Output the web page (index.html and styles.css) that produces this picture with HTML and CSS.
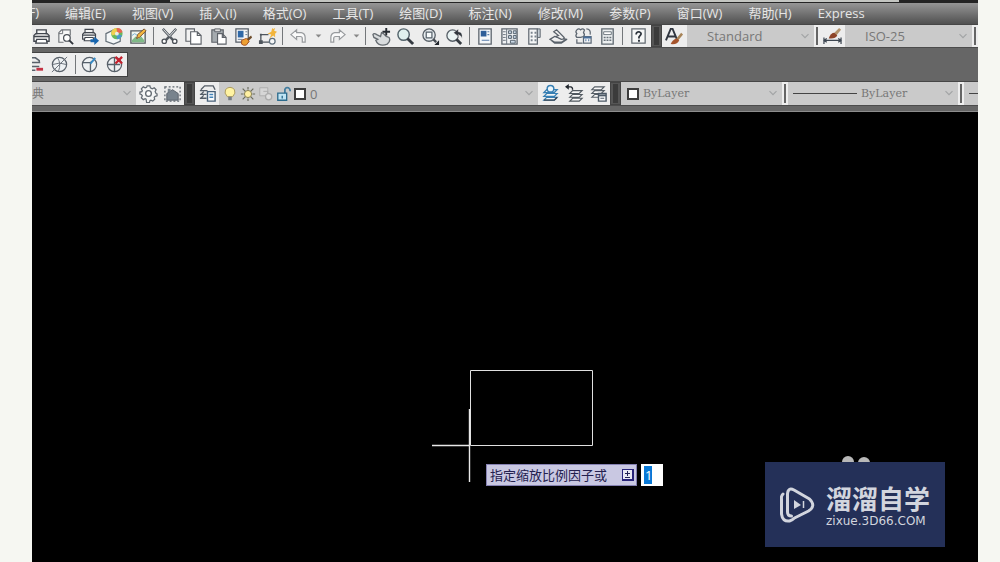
FILE: index.html
```html
<!DOCTYPE html>
<html lang="zh-CN">
<head>
<meta charset="utf-8">
<title>CAD</title>
<link rel="stylesheet" href="styles.css">
</head>
<body>
<svg class="defs" aria-hidden="true">
  <symbol id="chev" viewBox="0 0 8 6"><path d="M1 1l3 3 3-3" fill="none" stroke="#a2a4a5"/></symbol>
  <symbol id="printer" viewBox="0 0 20 20"><path d="M5 8V3h10v5M5 15H2V9l2-2h12l2 2v6h-3" fill="#f4f4f4" stroke="#41464e" stroke-width="1.4"/><path d="M2 10h16" stroke="#41464e" stroke-width="1.6"/><path d="M5 13h10l1 4H4z" fill="#fff" stroke="#41464e" stroke-width="1.4"/></symbol>
  <symbol id="layers" viewBox="0 0 20 20"><path d="M6 6h11l-3 3H3zM6 10h11l-3 3H3zM6 14h11l-3 3H3z" fill="#f2f4f5" stroke="currentColor" stroke-width="1.3"/></symbol>
  <symbol id="sphere" viewBox="0 0 20 20"><circle cx="10" cy="10" r="7.5" fill="#eef1f3" stroke="#59616a" stroke-width="1.3"/></symbol>
</svg>
<main class="app">
  <div class="titlestrip"><span class="tabstrip"></span></div>
  <nav class="menubar">
    <button class="menu menu-cut">(F)</button>
    <button class="menu">编辑(E)</button>
    <button class="menu">视图(V)</button>
    <button class="menu">插入(I)</button>
    <button class="menu">格式(O)</button>
    <button class="menu">工具(T)</button>
    <button class="menu">绘图(D)</button>
    <button class="menu">标注(N)</button>
    <button class="menu">修改(M)</button>
    <button class="menu">参数(P)</button>
    <button class="menu">窗口(W)</button>
    <button class="menu">帮助(H)</button>
    <button class="menu">Express</button>
  </nav>

  <div class="bar">
    <div class="group group-first">
      <button class="tool" aria-label="打印"><svg viewBox="0 0 20 20"><use href="#printer"/></svg></button>
      <button class="tool" aria-label="打印预览"><svg viewBox="0 0 20 20"><path d="M8 16H3V6l3-3h9v6" fill="#f8f8f8" stroke="#6d7176" stroke-width="1.2"/><path d="M3 7h4V3" fill="none" stroke="#6d7176"/><circle cx="11.500" cy="11.500" r="3.500" fill="#fff" stroke="#4b5057" stroke-width="1.3"/><path d="M14 14l4 4" stroke="#30353c" stroke-width="2"/></svg></button>
      <button class="tool" aria-label="发布"><svg viewBox="0 0 20 20"><use href="#printer" width="17" height="17"/><path d="M10 13h4v-3l5 4.500-5 4.500v-3h-4z" fill="#1765ae"/></svg></button>
      <button class="tool" aria-label="三维打印"><svg viewBox="0 0 20 20"><path d="M1 7l8-4 7 4v8l-7 3-8-3z" fill="#f4f7f8" stroke="#657079" stroke-width="1.3"/><circle cx="12.500" cy="7" r="6" fill="#68b95c"/><path d="M12 1a6 6 0 0 1 6.500 4.500L13 7z" fill="#e96652"/><path d="M6.500 7a6 6 0 0 1 5.500-6l1 6-5 2z" fill="#f0cf50"/><path d="M12 7l6 2a6 6 0 0 1-5.500 4z" fill="#4798cd"/><circle cx="12.500" cy="7" r="2" fill="#e8ede9"/></svg></button>
      <button class="tool" aria-label="标记"><svg viewBox="0 0 20 20"><path d="M2 4h15v13H2z" fill="#f0f5ee" stroke="#565c60" stroke-width="1.4"/><path d="M3 14l4-4 3 2 3-2 3 4v2H3z" fill="#7fb987"/><path d="M3 9l3-2 3 2 3-3" stroke="#75afd2" fill="none"/><path d="M8 12l1-4 7-6 2 2-7 7z" fill="#f4b63d" stroke="#76512e"/></svg></button>
    </div>
    <span class="sep"></span>
    <div class="group group-five">
      <button class="tool" aria-label="剪切"><svg viewBox="0 0 20 20"><path d="M3 2l11 12M17 2L6 14" stroke="#555b62" stroke-width="2.600"/><path d="M3.500 2.500l7 7.500M16.500 2.500L10 9.500" stroke="#eef0f1" stroke-width="1"/><circle cx="4.500" cy="15" r="2.300" fill="#fff" stroke="#4c5158" stroke-width="1.4"/><circle cx="15.500" cy="15" r="2.300" fill="#fff" stroke="#4c5158" stroke-width="1.4"/></svg></button>
      <button class="tool" aria-label="复制"><svg viewBox="0 0 20 20"><path d="M2 2h9v13H2z" fill="#f2f2f2" stroke="#5d6268" stroke-width="1.2"/><path d="M7 5h7l4 4v9H7zM14 5v4h4" fill="#fff" stroke="#5d6268" stroke-width="1.2"/></svg></button>
      <button class="tool" aria-label="粘贴"><svg viewBox="0 0 20 20"><path d="M3 3h12v13H3z" fill="#a5abaf" stroke="#5d6268" stroke-width="1.2"/><path d="M6 2h6v3H6z" fill="#ddd" stroke="#5d6268"/><path d="M9 7h5l4 4v7H9zM14 7v4h4" fill="#fff" stroke="#5d6268" stroke-width="1.2"/></svg></button>
      <button class="tool" aria-label="特性匹配"><svg viewBox="0 0 20 20"><path d="M2 2h13v14H2z" fill="#f4f5f6" stroke="#555d67" stroke-width="1.3"/><path d="M4 4h6v7H4z" fill="#2f68a7"/><path d="M12 5h2M12 8h2M4 13h5" stroke="#657c94"/><path d="M13 13l5-4 1 2-4 4z" fill="#6d4b29"/><path d="M8 14l5-2 3 3-3 4q-3 1-5-1z" fill="#eda032" stroke="#a45021"/></svg></button>
      <button class="tool" aria-label="块编辑器"><svg viewBox="0 0 20 20"><path d="M3 16V8h8m-8 8h10" fill="none" stroke="#4e555d" stroke-width="1.4"/><path d="M1 14h4v4H1zM2 7h2v2H2z" fill="#4e555d"/><circle cx="15" cy="15" r="3" fill="#f6f7f8" stroke="#5e6e7c" stroke-width="1.3"/><path d="M15 1l-1 4-4 2 4 1-2 4 4-3 2 2v-4l2-2-3-1 1-3-2 1z" fill="#f2b53d"/></svg></button>
    </div>
    <span class="sep"></span>
    <div class="group group-undo">
      <button class="tool" aria-label="放弃"><svg viewBox="0 0 20 20"><path d="M2 8l6-5v3h5q4 1 4 5v5h-3v-4q0-2-2-2H8v3z" fill="#fafafa" stroke="#989b9e" stroke-width="1.3"/></svg></button>
      <button class="tool drop" aria-label="放弃列表"><svg viewBox="0 0 20 20"><path d="M7 8h6l-3 3z" fill="#888"/></svg></button>
      <button class="tool" aria-label="重做"><svg viewBox="0 0 20 20"><path d="M18 8l-6-5v3H7q-4 1-4 5v5h3v-4q0-2 2-2h4v3z" fill="#fafafa" stroke="#989b9e" stroke-width="1.3"/></svg></button>
      <button class="tool drop" aria-label="重做列表"><svg viewBox="0 0 20 20"><path d="M7 8h6l-3 3z" fill="#888"/></svg></button>
    </div>
    <span class="sep"></span>
    <div class="group group-four">
      <button class="tool" aria-label="平移"><svg viewBox="0 0 20 20"><path d="M1 8q1-2 4 0l4 2 1-4 2 1 3 3 3 1q2 4-2 7-5 2-9 0-2-1-3-4l2-1-4-2z" fill="#d9dcde" stroke="#666c72" stroke-width="1.4"/><path d="M15 1v8M11 5h8" stroke="#252a31" stroke-width="2"/></svg></button>
      <button class="tool" aria-label="实时缩放"><svg viewBox="0 0 20 20"><circle cx="8" cy="8" r="6" fill="#e0f0ee" stroke="#53636b" stroke-width="1.5"/><path d="M12 12l6 6" stroke="#353b42" stroke-width="3"/></svg></button>
      <button class="tool" aria-label="窗口缩放"><svg viewBox="0 0 20 20"><circle cx="8.500" cy="8.500" r="6.500" fill="#e8edf0" stroke="#596169" stroke-width="1.4"/><path d="M5.500 5.500h6v6h-6z" fill="#f8fbfc" stroke="#56616b" stroke-width="1.3"/><path d="M13 13l3 3" stroke="#454b52" stroke-width="2.500"/><path d="M19 14v5h-5z" fill="#20252c"/></svg></button>
      <button class="tool" aria-label="上一个缩放"><svg viewBox="0 0 20 20"><circle cx="8" cy="9" r="6" fill="#eaf4f4" stroke="#596169" stroke-width="1.4"/><path d="M12 13l5 5" stroke="#353b42" stroke-width="3"/><path d="M9 6l5-4v3q5 0 4 7-1-3-4-4v2z" fill="#30363e" stroke="#f0f0f0" stroke-width=".5"/></svg></button>
    </div>
    <span class="sep"></span>
    <div class="group group-six">
      <button class="tool" aria-label="特性"><svg viewBox="0 0 20 20"><path d="M3 2h13v16H3z" fill="#f5f7f9" stroke="#606871" stroke-width="1.4"/><path d="M5 4h6v6H5z" fill="#2e5e99"/><path d="M12 5h2M12 8h2M6 14h8" stroke="#597eab" stroke-width="1.2"/></svg></button>
      <button class="tool" aria-label="设计中心"><svg viewBox="0 0 20 20"><path d="M2 2h16v16H2z" fill="#f0f2f4" stroke="#606871" stroke-width="1.4"/><path d="M7 2v16M3 5h3M3 8h3M3 11h3M3 14h3" stroke="#69737d"/><path d="M9 4h3v3H9zM14 4h3v3h-3zM9 9h3v3H9zM14 9h3v3h-3zM11 14h5v3h-5z" fill="#cbd9e6" stroke="#53606b"/></svg></button>
      <button class="tool" aria-label="工具选项板"><svg viewBox="0 0 20 20"><path d="M4 2h9v16H4z" fill="#f5f6f7" stroke="#606871" stroke-width="1.3"/><path d="M13 2h3v9h-3z" fill="#c4cdd4" stroke="#606871"/><path d="M6 5h2v2H6zM10 5h2v2h-2zM6 9h2v2H6zM10 9h2v2h-2zM6 13h2v2H6zM10 13h2v2h-2z" fill="#7a848e"/></svg></button>
      <button class="tool" aria-label="图纸集"><svg viewBox="0 0 20 20"><path d="M1 13l5-3 12 3-5 3H6zM1 13l5 4h7l6-4" fill="#f3f4f5" stroke="#59616a" stroke-width="1.3"/><path d="M5 5l3-2 8 8q0 2-3 2l-6-3 3-1z" fill="#eee" stroke="#59616a" stroke-width="1.3"/></svg></button>
      <button class="tool" aria-label="标记集"><svg viewBox="0 0 20 20"><path d="M3 3q2-2 4 0 2-2 4 0l-1 3q2 2 0 4l-3 1-4 0q-2-2 0-4-2-2 0-4zM3 13v4h6M13 2q5 0 4 6" fill="none" stroke="#5d6670" stroke-width="1.3"/><path d="M10 10h8v7h-8z" fill="#f4f5f6" stroke="#5b6876" stroke-width="1.3"/><path d="M10 11h8M12 14h1M15 14h1" stroke="#496f9b" stroke-width="2"/></svg></button>
      <button class="tool" aria-label="计算器"><svg viewBox="0 0 20 20"><path d="M4 2h12v16H4z" fill="#edf0f1" stroke="#626b73" stroke-width="1.4"/><path d="M6 5h8v3H6z" fill="#fff" stroke="#6a747c"/><path d="M6 11h2M9 11h2M12 11h2M6 14h2M9 14h2M12 14h2" stroke="#68717a" stroke-width="1.5"/></svg></button>
    </div>
    <span class="sep"></span>
    <div class="group"><button class="tool" aria-label="帮助"><svg viewBox="0 0 20 20"><path d="M3 2h14v15H3z" fill="#f6f7f7" stroke="#616970" stroke-width="1.3"/><path d="M7.500 8q0-3 3-3 3 1 2 3l-2 2.500V12" fill="none" stroke="#293039" stroke-width="1.8"/><path d="M9.500 13.500h2v2h-2z" fill="#293039"/></svg></button></div>
    <span class="grip"></span>
    <div class="group"><button class="tool" aria-label="文字样式"><svg viewBox="0 0 20 20"><path d="M1 14L6 2h2l5 12M3 10h8" fill="none" stroke="#303640" stroke-width="2"/><path d="M12 12l5-6 2 2-5 6z" fill="#a78458"/><path d="M6 18q2-5 6-6l3 2q-2 5-9 4z" fill="#a6542c"/></svg></button></div>
    <label class="combo combo-style"><select aria-label="文字样式名"><option>Standard</option></select><svg class="chev"><use href="#chev"/></svg></label>
    <span class="divider"></span>
    <div class="group"><button class="tool" aria-label="标注样式"><svg viewBox="0 0 20 20"><path d="M1 11v7M19 11v7M1 14h18M4 12l-3 2 3 2M16 12l3 2-3 2" fill="none" stroke="#3e4752" stroke-width="1.3"/><path d="M12 6l5-5 2 2-5 6z" fill="#b3946c"/><path d="M6 12q2-6 6-6l3 3q-2 4-9 3z" fill="#8e4529"/></svg></button></div>
    <label class="combo combo-style"><select aria-label="标注样式名"><option>ISO-25</option></select><svg class="chev"><use href="#chev"/></svg></label>
    <span class="divider"></span>
  </div>

  <div class="bar-float">
    <button class="tool tool-half" aria-label="线框"><svg viewBox="0 0 20 20"><path d="M3 8V3h8l4 3v2M2 8h14M3 12h12M3 16h8" fill="none" stroke="#59616a" stroke-width="1.6"/><path d="M12 15h7" stroke="#c43244" stroke-width="3"/></svg></button>
    <button class="tool tool-small" aria-label="隐藏"><svg viewBox="0 0 20 20"><use href="#sphere"/><path d="M8 3q4 6 1 14M3 10q7-3 14 0M2 18L18 2" fill="none" stroke="#69717a"/></svg></button>
    <span class="sep sep-float"></span>
    <button class="tool" aria-label="着色"><svg viewBox="0 0 20 20"><use href="#sphere"/><path d="M3 8h8v9M11 8l4-3" fill="none" stroke="#56616b" stroke-width="1.4"/><path d="M11 9l5-6" stroke="#398cc7" stroke-width="2"/></svg></button>
    <button class="tool" aria-label="删除"><svg viewBox="0 0 20 20"><use href="#sphere"/><path d="M3 10h13M10 3v14" fill="none" stroke="#56616b" stroke-width="1.4"/><path d="M11 2l7 7M18 2l-7 7" stroke="#c5222f" stroke-width="2.400"/></svg></button>
  </div>

  <div class="bar bar-layers">
    <label class="combo combo-space"><select aria-label="工作空间"><option>典</option></select><svg class="chev"><use href="#chev"/></svg></label>
    <div class="group">
      <button class="tool" aria-label="工作空间设置"><svg viewBox="0 0 20 20"><path d="M8.500 2h3l.5 2 2 1 2-1 2 2-1 2 1 2 1 .5v2l-2 .5-1 1 .5 2-2 2-2-1-1 .5-.5 2h-3L7.500 16l-1-.5-2 1-2-2 1-2-1-1.500-1.500-.5v-2L3 8l.5-1L2.500 5l2-2 2 1L8 3.500z" fill="#f4f5f5" stroke="#626a72" stroke-width="1.3"/><circle cx="10" cy="10" r="3" fill="#fff" stroke="#626a72" stroke-width="1.4"/></svg></button>
      <button class="tool" aria-label="我的工作空间"><svg viewBox="0 0 20 20"><path d="M2 3h16v15H2z" fill="none" stroke="#5c646c" stroke-width="1.3" stroke-dasharray="2 2"/><path d="M4 10l6-4 6 4v7H4z" fill="#78838d" stroke="#59616a"/><path d="M5 9V5h3v3" fill="#78838d"/></svg></button>
    </div>
    <span class="grip"></span>
    <div class="group"><button class="tool" aria-label="图层特性"><svg viewBox="0 0 20 20"><path d="M3 6l4-4h9l2 4M2 7h8M2 11h7M2 15h7M3 11l3-3M3 15l3-3" fill="none" stroke="#565e67" stroke-width="1.4"/><path d="M10 8h8v10h-8z" fill="#fafcfe" stroke="#486179" stroke-width="1.5"/><path d="M12 11h4M12 14h4" stroke="#4383b8" stroke-width="1.5"/></svg></button></div>
    <label class="combo combo-layer">
      <svg class="mini" viewBox="0 0 16 18"><path d="M5 12Q1 8 3 4q5-5 10 0 2 4-2 8z" fill="#fff3a2" stroke="#a29257"/><path d="M6 12h4v4H6z" fill="#777e86"/></svg>
      <svg class="mini" viewBox="0 0 16 18"><path d="M8 1v3M8 14v3M0 9h3M13 9h3M2 3l3 3M11 12l3 3M14 3l-3 3M2 15l3-3" stroke="#696b5d" stroke-width="1.3"/><circle cx="8" cy="9" r="4" fill="#fff0a2" stroke="#7d7548"/></svg>
      <svg class="mini" viewBox="0 0 16 18"><path d="M1 2h9v9H1zM5 6h5v7" fill="#d6d6d6" stroke="#aaa"/><circle cx="11" cy="12" r="3.500" fill="#ddd" stroke="#aaa" stroke-width="1.4"/></svg>
      <svg class="mini" viewBox="0 0 16 18"><path d="M9 9V4q1-3 4-2 2 1 2 4" fill="none" stroke="#427d9f" stroke-width="2"/><path d="M1 8h10v8H1z" fill="#bfe4f4" stroke="#2c6b8c" stroke-width="1.5"/><path d="M6 11v3" stroke="#2c6b8c" stroke-width="1.5"/></svg>
      <span class="swatch"></span>
      <select aria-label="图层"><option>0</option></select><svg class="chev"><use href="#chev"/></svg>
    </label>
    <div class="group">
      <button class="tool" aria-label="置为当前"><svg class="blue" viewBox="0 0 20 20"><use href="#layers"/><circle cx="10" cy="5" r="3.500" fill="#e9f4fa" stroke="#357eb3" stroke-width="1.5"/><path d="M3 17h11l3-3" fill="none" stroke="#3d4650" stroke-width="1.5"/></svg></button>
      <button class="tool" aria-label="上一个图层"><svg viewBox="0 0 20 20"><path d="M8 7h10l-3 3H5zM8 11h10l-3 3H5zM8 15h10l-3 3H5z" fill="#f8f8f8" stroke="#50585f" stroke-width="1.2"/><path d="M3 3h3q2 0 2 3" fill="none" stroke="#20262d" stroke-width="1.4"/><path d="M4 0v6L0 3z" fill="#20262d"/></svg></button>
      <button class="tool" aria-label="图层状态"><svg viewBox="0 0 20 20"><path d="M6 3h10l-3 3H3zM6 7h10l-3 3H3zM6 11h10l-3 3H3z" fill="#f8f8f8" stroke="#565e66" stroke-width="1.2"/><path d="M10 10h8v8h-8z" fill="#f8f9fa" stroke="#4c5966" stroke-width="1.5"/><path d="M10 12h8" stroke="#4c5966" stroke-width="2"/><path d="M12 15h4" stroke="#4c5966"/></svg></button>
    </div>
    <span class="grip"></span>
    <label class="combo combo-color"><span class="swatch"></span><select class="serif" aria-label="颜色"><option>ByLayer</option></select><svg class="chev"><use href="#chev"/></svg></label>
    <span class="divider"></span>
    <label class="combo combo-line"><span class="line"></span><select class="serif" aria-label="线型"><option>ByLayer</option></select><svg class="chev"><use href="#chev"/></svg></label>
    <span class="divider"></span>
    <span class="combo combo-rest"><span class="line"></span></span>
  </div>

  <section class="canvas">
    <svg class="drawing" viewBox="0 0 162 116"><path d="M38.500 1.500h122v75h-122z" fill="none" stroke="#e0e0e0"/><path d="M0 76.500h38M37.500 40v73" stroke="#e8e8e8" stroke-width="1.4"/></svg>
    <div class="prompt">
      <label class="prompt-text" for="factor">指定缩放比例因子或<svg class="key" viewBox="0 0 12 12"><path d="M0 0h12v12H0z" fill="#28247a"/><path d="M1 1h9v9H1z" fill="#e9e9f3"/><path d="M5.500 2v5M3 4.500h5M3 8.500h5" stroke="#222254"/></svg></label>
      <input class="factor" id="factor" value="1">
    </div>
    <div class="watermark">
      <svg class="ears" viewBox="0 0 30 6"><circle cx="7" cy="6" r="6" fill="#b8b8b8"/><circle cx="23" cy="7" r="6" fill="#b8b8b8"/></svg>
      <svg class="logo" viewBox="0 0 36 38"><path d="M3 8Q1 10 1.500 13v15q1 8 8 7 3-1 5-3l14-7q8-5 1-12L14 4Q8 1 7.500 8v18q0 4 4 4" fill="none" stroke="#d2d5de" stroke-width="3" stroke-linecap="round" stroke-linejoin="round"/><path d="M14 14l7 5-7 4z" fill="#d2d5de"/><path d="M23.500 15v7" stroke="#d2d5de" stroke-width="1.500"/></svg>
      <div class="brand"><strong class="brand-name">溜溜自学</strong><span class="brand-url">zixue.3D66.COM</span></div>
    </div>
  </section>
</main>
</body>
</html>
```

FILE: styles.css
```css
* { box-sizing: border-box; }
body { margin: 0; background: #f6f7f2; font-family: "Open Sans", "Noto Sans CJK SC", sans-serif; }
button, select, input { font: inherit; margin: 0; padding: 0; border: 0; border-radius: 0; background: none; }
.defs { display: none; }
.app { display: flex; flex-direction: column; height: 100vh; margin: 0 22px 0 32px; overflow: hidden; background: #666; }
.titlestrip { flex: none; height: 3px; padding: 0 79px 0 138px; background: #242424; }
.tabstrip { display: block; height: 2px; background: #c3c5c1; }

.menubar { display: flex; flex: none; gap: 26px; height: 21px; padding-bottom: 2px; background: linear-gradient(#969696, #505050); overflow: hidden; }
.menu { flex: none; color: #e6e6e6; font-size: 13px; line-height: 18px; white-space: nowrap; }
.menu-cut { display: flex; justify-content: flex-end; width: 7px; }

.bar { display: flex; flex: none; height: 24px; border-top: 1px solid #464646; border-bottom: 1px solid #4c4c4c; background: #ececec; overflow: hidden; }
.bar-layers { height: 25px; margin-top: 4px; }
.group { display: flex; flex: none; background: #ededed; }
.tool { flex: none; display: flex; align-items: center; justify-content: center; width: 25px; height: 100%; }
.bar-layers .tool { width: 24px; }
.tool svg { flex: none; width: 19px; height: 19px; }
.blue { color: #357eb3; }
.group-first { width: 122px; margin-left: -3px; }
.group-five { width: 123px; }
.group-undo { width: 77px; }
.group-four { width: 98px; }
.group-six { width: 147px; }
.group-first .tool, .group-five .tool, .group-undo .tool, .group-four .tool, .group-six .tool { flex: 1; width: auto; min-width: 0; }
.group-undo .drop { flex: none; width: 13px; }
.sep { flex: none; width: 1px; margin: 2px 3px 2px 2px; background: #74777a; }
.grip { flex: none; width: 11px; border: 3px solid #555; border-width: 2px 3px; background: #3b3b3b; outline: 1px solid #444; outline-offset: -1px; }
.divider { flex: none; width: 6px; padding: 2px 0; background: #eee; }
.divider::before { content: ""; display: block; width: 2px; height: 100%; margin-left: 2px; background: #656565; }

.combo { display: flex; flex: none; align-items: center; height: 100%; padding-right: 4px; background: #cacaca; color: #777; font-size: 13px; }
.combo select { flex: 1; min-width: 0; height: 100%; appearance: none; color: inherit; line-height: 20px; }
.chev { flex: none; width: 10px; height: 7px; }
.combo-style { flex: 1 1 127px; padding-left: 20px; }
.combo-space { width: 104px; font-size: 12px; }
.combo-layer { flex: 1 1 319px; padding-left: 3px; font-size: 13px; }
.combo-color { flex: 1 1 161px; padding-left: 6px; }
.combo-line { flex: 1 1 170px; gap: 4px; padding-left: 5px; }
.combo-rest { width: 14px; padding: 0 0 0 5px; }
.combo .serif { font-family: "DejaVu Serif", serif; font-size: 11px; }
.line { flex: none; width: 64px; height: 1px; background: #444; }
.mini { flex: none; width: 16px; height: 16px; margin-right: 2px; }
.swatch { flex: none; width: 12px; height: 12px; margin-right: 4px; border: 2px solid #3d3d3d; background: #fff; }

.bar-float { display: flex; flex: none; align-self: flex-start; height: 25px; margin-top: 4px; border: 1px solid #424242; border-left: 0; background: #eee; }
.tool-half { width: 12px; justify-content: flex-end; }
.tool-small { width: 30px; }
.sep-float { margin: 2px 1px; }

.canvas { position: relative; flex: 1; min-height: 0; margin-top: 5px; border-top: 1px solid #8d8d8d; background: #000; overflow: hidden; }
.drawing { position: absolute; left: 400px; top: 257px; width: 162px; height: 116px; }
.prompt { position: absolute; left: 454px; top: 352px; display: flex; gap: 4px; height: 22px; }
.prompt-text { display: flex; align-items: center; gap: 15px; padding: 0 2px 0 3px; border: 1px solid #8581b2; background: #c9c8e2; color: #24214f; font-size: 13px; line-height: 20px; white-space: nowrap; }
.key { width: 12px; height: 12px; }
.factor { width: 22px; padding-left: 4px; background: linear-gradient(#0878d6, #0878d6) 3px 2px / 8px 18px no-repeat #fff; color: #fff; font-size: 13px; line-height: 20px; }
.watermark { position: absolute; left: 733px; top: 350px; display: flex; align-items: center; gap: 10px; width: 180px; height: 85px; padding-left: 15px; background: #243058; color: #d2d5de; }
.ears { position: absolute; left: 76px; top: -6px; width: 30px; height: 6px; }
.logo { flex: none; width: 36px; height: 38px; }
.brand { display: flex; flex-direction: column; }
.brand-name { font-family: "Noto Sans CJK SC", sans-serif; font-size: 26px; font-weight: 700; line-height: 32px; }
.brand-url { font-family: "DejaVu Sans", sans-serif; font-size: 12px; line-height: 14px; }
```
